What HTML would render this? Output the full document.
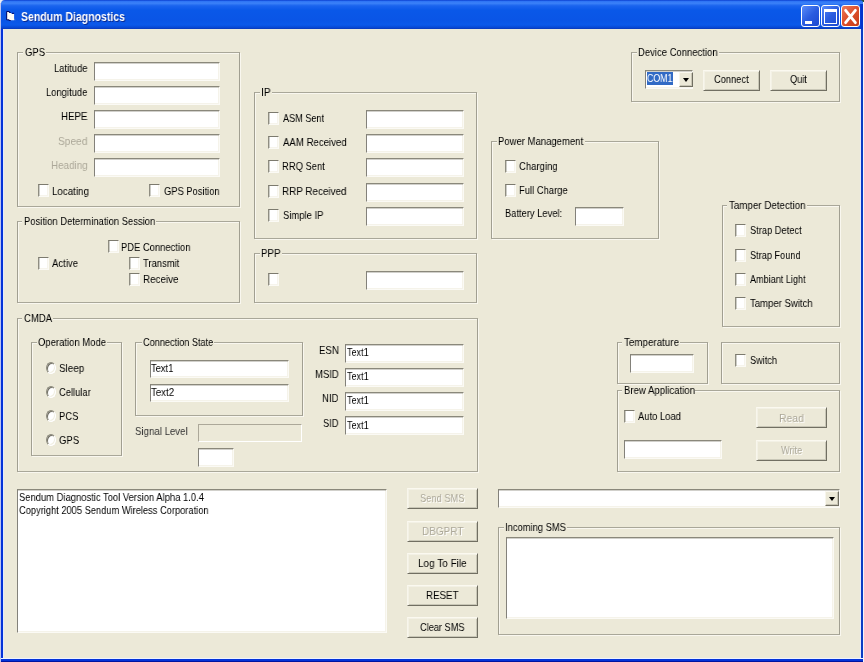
<!DOCTYPE html>
<html><head><meta charset="utf-8"><title>Sendum Diagnostics</title>
<style>
html,body{margin:0;padding:0;}
body{width:864px;height:662px;overflow:hidden;background:#ece9d8;position:relative;font-family:"Liberation Sans",sans-serif;}
#win{position:absolute;left:0;top:0;width:864px;height:662px;overflow:hidden;background:#ece9d8;}
.t{will-change:transform;position:absolute;font:11px/13px "Liberation Sans",sans-serif;white-space:nowrap;color:#000;transform-origin:0 0;}
.t.dis{color:#aca899;}
.t.dg{color:#aca899;}
.t.dw{color:#fff;}
.t.wh{color:#fff;}
.t.sl{color:#333;}
.gg{position:absolute;border:1px solid #a19f91;border-top-color:#a9a799;border-bottom-color:#a9a799;box-sizing:border-box;}
.gw{position:absolute;border:1px solid #f9f7ef;box-sizing:border-box;}
.gl{position:absolute;background:#ece9d8;}
.tb{position:absolute;box-sizing:border-box;background:#fff;border-top:1px solid #8a887b;border-left:1px solid #83817a;border-right:1px solid #fbfaf5;border-bottom:1px solid #fbfaf5;box-shadow:inset 0 1px 0 rgba(140,138,125,.4), inset -1px -1px 0 #f5f3ea;}
.cb{position:absolute;box-sizing:border-box;width:11px;height:13px;background:#fff;border-top:1px solid #7c7a6e;border-left:1px solid #8f8d81;border-right:1px solid #fbfaf5;border-bottom:1px solid #fbfaf5;box-shadow:inset 1px 0 0 rgba(143,141,129,.45), inset -1px -1px 0 #f6f4ec;}
.rd{position:absolute;box-sizing:border-box;width:10px;height:12px;border-radius:50%;background:#fff;border:1px solid;border-color:#8a887a #fff #fff #8a887a;box-shadow:inset 1px 1px 0 #716f64, inset -1px -1px 0 #f1efe2;}
.bt{position:absolute;box-sizing:border-box;background:#ece9d8;border-top:1px solid #fbf9f0;border-left:1px solid #f8f6ec;border-right:1px solid #716f62;border-bottom:1px solid #716f62;box-shadow:inset 1px 1px 0 #f3f1e5, inset -1px -1px 0 rgba(113,111,98,.28);}
.pb{position:absolute;box-sizing:border-box;border:1px solid;border-color:#aca899 #fff #fff #aca899;}
.sel{position:absolute;background:#316ac5;}
.dd{position:absolute;box-sizing:border-box;background:#ece9d8;border-top:1px solid #fbf9f0;border-left:1px solid #f8f6ec;border-right:1px solid #716f62;border-bottom:1px solid #716f62;box-shadow:inset -1px -1px 0 #c8c5b5;}
.dd i{position:absolute;left:2.5px;top:4.5px;width:0;height:0;border-left:3px solid transparent;border-right:3px solid transparent;border-top:4px solid #000;}
/* window chrome */
#corner{position:absolute;left:0;top:0;width:864px;height:6px;background:linear-gradient(to right,#eceef4 0,#eceef4 6px,#0a3ed0 6px,#0a3ed0 860px,#2a5236 860px);}
#title{position:absolute;left:1px;top:0;width:862px;height:29px;background:linear-gradient(to bottom,#0a3ed0 0%,#2f75f5 5%,#3c82f8 11%,#1a64ee 20%,#0a58e8 35%,#0a55e6 70%,#0b59ea 86%,#0848d4 95%,#0a38b8 100%);border-radius:4px 3px 0 0;}
#bl{position:absolute;left:0;top:3px;width:4px;height:659px;background:linear-gradient(to right,#bcc3f0 0,#bcc3f0 1px,#0433d8 1px,#0433d8 3px,#e4eafc 3px);}
#br{position:absolute;left:860px;top:3px;width:4px;height:659px;background:linear-gradient(to right,#e4eafc 0,#e4eafc 1px,#0c3cc4 1px,#0c3cc4 3px,#f2f4fc 3px);}
#bb{position:absolute;left:1px;top:658px;width:862px;height:4px;background:linear-gradient(to bottom,#eef2ff 0,#eef2ff 1px,#0433d8 1px,#0433d8 3px,#0014a0 3px);}
.wb{position:absolute;top:5px;width:19px;height:22px;box-sizing:border-box;border:1px solid #fff;border-radius:3px;background:linear-gradient(135deg,#5a8cfa 0%,#2a5ce0 50%,#1c48d0 100%);}
#bx{background:linear-gradient(135deg,#ec7a5c 0%,#dc4e2a 50%,#c63c18 100%);}
#tr{position:absolute;left:860px;top:4px;width:3px;height:25px;background:linear-gradient(to right,#0a48dc 0,#0434cc 1px,#0434cc 3px);}
#tr2{position:absolute;left:863px;top:2px;width:1px;height:28px;background:#f2f4fc;}

</style></head><body>
<div id="win">
<div id="corner"></div>
<div id="bl"></div><div id="br"></div><div id="bb"></div>
<div id="title"></div><div id="tr"></div><div id="tr2"></div>
<svg style="position:absolute;left:5px;top:10px" width="12" height="12" viewBox="0 0 12 12"><path d="M2 2h2.2v1h2.4v1h2.5v6.3h-4.8v-0.6h-2.3z" fill="#fdfcf8"/><path d="M1.7 9.9V1.5h2.6v1h1.4M6.9 3.3h2.2M1.7 9.8h2.4v0.7h1.6" fill="none" stroke="#00005a" stroke-width="0.9"/><path d="M9.1 8.2l1.6 2.1h-1.6z" fill="#7aa0d8" opacity=".7"/></svg>
<span class="t" style="left:20.8px;top:9px;font:bold 12px/16px 'Liberation Sans',sans-serif;color:#fff;transform:scaleX(.876);text-shadow:1px 1px 0 #0a2a90">Sendum Diagnostics</span>
<div class="wb" style="left:801px"><div style="position:absolute;left:3px;top:15px;width:7px;height:3px;background:#fff"></div></div>
<div class="wb" style="left:821px"><div style="position:absolute;left:2px;top:3px;width:13px;height:15px;box-sizing:border-box;border:1.5px solid #fff;border-top-width:3px"></div></div>
<div class="wb" id="bx" style="left:841px"><svg width="17" height="20" viewBox="0 0 17 20" style="position:absolute;left:0;top:0"><path d="M3.6 4.3L13.4 16.7M13.4 4.3L3.6 16.7" stroke="#fff" stroke-width="2.8" stroke-linecap="round"/></svg></div>

<div class="gw" style="left:18px;top:53px;width:223px;height:155px"></div>
<div class="gg" style="left:17px;top:52px;width:223px;height:155px"></div>
<div class="gl" style="left:23.2px;top:50px;width:22.599999999999998px;height:6px"></div>
<span class="t " style="left:24.73px;top:46px;transform:scaleX(0.8602);">GPS</span>
<div class="tb" style="left:94px;top:62px;width:126px;height:19px"></div>
<span class="t " style="left:53.83px;top:62px;transform:scaleX(0.8569);">Latitude</span>
<div class="tb" style="left:94px;top:86px;width:126px;height:19px"></div>
<span class="t " style="left:46.03px;top:86px;transform:scaleX(0.8562);">Longitude</span>
<div class="tb" style="left:94px;top:110px;width:126px;height:19px"></div>
<span class="t " style="left:60.95px;top:110px;transform:scaleX(0.884);">HEPE</span>
<div class="tb" style="left:94px;top:134px;width:126px;height:19px"></div>
<span class="t dis" style="left:58.29px;top:134.7px;transform:scaleX(0.9231);">Speed</span>
<div class="tb" style="left:94px;top:158px;width:126px;height:19px"></div>
<span class="t dis" style="left:50.94px;top:158.7px;transform:scaleX(0.8956);">Heading</span>
<div class="cb" style="left:38px;top:184px"></div>
<span class="t " style="left:51.7px;top:185px;transform:scaleX(0.8885);">Locating</span>
<div class="cb" style="left:149px;top:184px"></div>
<span class="t " style="left:164.03px;top:185px;transform:scaleX(0.8496);">GPS Position</span>
<div class="gw" style="left:18px;top:222px;width:223px;height:82px"></div>
<div class="gg" style="left:17px;top:221px;width:223px;height:82px"></div>
<div class="gl" style="left:22.4px;top:219px;width:133.4px;height:6px"></div>
<span class="t " style="left:23.63px;top:215px;transform:scaleX(0.8588);">Position Determination Session</span>
<div class="cb" style="left:108px;top:240px"></div>
<span class="t " style="left:121.43px;top:241px;transform:scaleX(0.8544);">PDE Connection</span>
<div class="cb" style="left:38px;top:257px"></div>
<span class="t " style="left:52.46px;top:256.5px;transform:scaleX(0.8722);">Active</span>
<div class="cb" style="left:129px;top:257px"></div>
<span class="t " style="left:143.39px;top:256.5px;transform:scaleX(0.8585);">Transmit</span>
<div class="cb" style="left:129px;top:273px"></div>
<span class="t " style="left:142.79px;top:272.7px;transform:scaleX(0.8968);">Receive</span>
<div class="gw" style="left:255px;top:93px;width:223px;height:147px"></div>
<div class="gg" style="left:254px;top:92px;width:223px;height:147px"></div>
<div class="gl" style="left:259.75px;top:90px;width:11.75px;height:6px"></div>
<span class="t " style="left:260.81px;top:86px;transform:scaleX(0.9361);">IP</span>
<div class="cb" style="left:268px;top:112px"></div>
<span class="t " style="left:282.96px;top:112px;transform:scaleX(0.8298);">ASM Sent</span>
<div class="tb" style="left:366px;top:110px;width:98px;height:19px"></div>
<div class="cb" style="left:268px;top:136px"></div>
<span class="t " style="left:282.96px;top:136px;transform:scaleX(0.8748);">AAM Received</span>
<div class="tb" style="left:366px;top:134px;width:98px;height:19px"></div>
<div class="cb" style="left:268px;top:160px"></div>
<span class="t " style="left:282.23px;top:160px;transform:scaleX(0.8543);">RRQ Sent</span>
<div class="tb" style="left:366px;top:158px;width:98px;height:19px"></div>
<div class="cb" style="left:268px;top:185px"></div>
<span class="t " style="left:282.19px;top:185px;transform:scaleX(0.896);">RRP Received</span>
<div class="tb" style="left:366px;top:183px;width:98px;height:19px"></div>
<div class="cb" style="left:268px;top:209px"></div>
<span class="t " style="left:282.57px;top:209px;transform:scaleX(0.8586);">Simple IP</span>
<div class="tb" style="left:366px;top:207px;width:98px;height:19px"></div>
<div class="gw" style="left:255px;top:254px;width:223px;height:50px"></div>
<div class="gg" style="left:254px;top:253px;width:223px;height:50px"></div>
<div class="gl" style="left:260px;top:251px;width:21.69999999999999px;height:6px"></div>
<span class="t " style="left:261.2px;top:247px;transform:scaleX(0.8876);">PPP</span>
<div class="cb" style="left:268px;top:273px"></div>
<div class="tb" style="left:366px;top:271px;width:98px;height:19px"></div>
<div class="gw" style="left:18px;top:319px;width:461px;height:154px"></div>
<div class="gg" style="left:17px;top:318px;width:461px;height:154px"></div>
<div class="gl" style="left:22.4px;top:316px;width:31.1px;height:6px"></div>
<span class="t " style="left:23.92px;top:312px;transform:scaleX(0.8678);">CMDA</span>
<div class="gw" style="left:32px;top:343px;width:91px;height:114px"></div>
<div class="gg" style="left:31px;top:342px;width:91px;height:114px"></div>
<div class="gl" style="left:36.8px;top:340px;width:70.7px;height:6px"></div>
<span class="t " style="left:38.37px;top:336px;transform:scaleX(0.8626);">Operation Mode</span>
<div class="rd" style="left:45.5px;top:362px"></div>
<span class="t " style="left:59.15px;top:362px;transform:scaleX(0.8985);">Sleep</span>
<div class="rd" style="left:45.5px;top:386px"></div>
<span class="t " style="left:59.13px;top:386px;transform:scaleX(0.8496);">Cellular</span>
<div class="rd" style="left:45.5px;top:410px"></div>
<span class="t " style="left:58.83px;top:410px;transform:scaleX(0.8609);">PCS</span>
<div class="rd" style="left:45.5px;top:434px"></div>
<span class="t " style="left:59.12px;top:434px;transform:scaleX(0.8647);">GPS</span>
<div class="gw" style="left:136px;top:343px;width:168px;height:74px"></div>
<div class="gg" style="left:135px;top:342px;width:168px;height:74px"></div>
<div class="gl" style="left:141.6px;top:340px;width:72.9px;height:6px"></div>
<span class="t " style="left:143.14px;top:336px;transform:scaleX(0.8322);">Connection State</span>
<div class="tb" style="left:150px;top:360px;width:139px;height:18px"></div>
<span class="t " style="left:151.39px;top:362.2px;transform:scaleX(0.8508);">Text1</span>
<div class="tb" style="left:150px;top:384px;width:139px;height:18px"></div>
<span class="t " style="left:151.38px;top:386.3px;transform:scaleX(0.88);">Text2</span>
<span class="t sl" style="left:134.96px;top:424.7px;transform:scaleX(0.879);">Signal Level</span>
<div class="pb" style="left:198px;top:424px;width:104px;height:18px"></div>
<div class="tb" style="left:198px;top:448px;width:36px;height:19px"></div>
<div class="tb" style="left:345px;top:344px;width:119px;height:19px"></div>
<span class="t " style="left:319.01px;top:344.2px;transform:scaleX(0.8795);">ESN</span>
<span class="t " style="left:346.79px;top:346px;transform:scaleX(0.8234);">Text1</span>
<div class="tb" style="left:345px;top:368px;width:119px;height:19px"></div>
<span class="t " style="left:314.82px;top:368.1px;transform:scaleX(0.8637);">MSID</span>
<span class="t " style="left:346.79px;top:370.2px;transform:scaleX(0.8234);">Text1</span>
<div class="tb" style="left:345px;top:392px;width:119px;height:19px"></div>
<span class="t " style="left:322.12px;top:392px;transform:scaleX(0.8681);">NID</span>
<span class="t " style="left:346.79px;top:394.4px;transform:scaleX(0.8234);">Text1</span>
<div class="tb" style="left:345px;top:416px;width:119px;height:19px"></div>
<span class="t " style="left:323.08px;top:416.7px;transform:scaleX(0.8436);">SID</span>
<span class="t " style="left:346.79px;top:418.6px;transform:scaleX(0.8234);">Text1</span>
<div class="gw" style="left:492px;top:142px;width:168px;height:98px"></div>
<div class="gg" style="left:491px;top:141px;width:168px;height:98px"></div>
<div class="gl" style="left:496.75px;top:139px;width:87.75px;height:6px"></div>
<span class="t " style="left:497.97px;top:135px;transform:scaleX(0.864);">Power Management</span>
<div class="cb" style="left:505px;top:160px"></div>
<span class="t " style="left:519.02px;top:160px;transform:scaleX(0.8651);">Charging</span>
<div class="cb" style="left:505px;top:184px"></div>
<span class="t " style="left:518.73px;top:184px;transform:scaleX(0.8559);">Full Charge</span>
<span class="t " style="left:504.99px;top:207px;transform:scaleX(0.8492);">Battery Level:</span>
<div class="tb" style="left:575px;top:207px;width:49px;height:19px"></div>
<div class="gw" style="left:632px;top:53px;width:209px;height:50px"></div>
<div class="gg" style="left:631px;top:52px;width:209px;height:50px"></div>
<div class="gl" style="left:636.75px;top:50px;width:81.75px;height:6px"></div>
<span class="t " style="left:637.97px;top:46px;transform:scaleX(0.8626);">Device Connection</span>
<div class="tb" style="left:645px;top:70px;width:48px;height:19px"></div>
<div class="sel" style="left:647px;top:72px;width:26px;height:13px"></div>
<span class="t wh" style="left:647.06px;top:72px;transform:scaleX(0.798);">COM1</span>
<div class="dd" style="left:679px;top:72px;width:14px;height:15px"><i></i></div>
<div class="bt" style="left:703px;top:70px;width:57px;height:21px"></div>
<span class="t " style="left:714.04px;top:72.6px;transform:scaleX(0.8424);">Connect</span>
<div class="bt" style="left:770px;top:70px;width:57px;height:21px"></div>
<span class="t " style="left:790.18px;top:72.6px;transform:scaleX(0.8362);">Quit</span>
<div class="gw" style="left:723px;top:206px;width:118px;height:122px"></div>
<div class="gg" style="left:722px;top:205px;width:118px;height:122px"></div>
<div class="gl" style="left:727.25px;top:203px;width:79.25px;height:6px"></div>
<span class="t " style="left:729.03px;top:199px;transform:scaleX(0.8885);">Tamper Detection</span>
<div class="cb" style="left:735px;top:224px"></div>
<span class="t " style="left:750.08px;top:224.4px;transform:scaleX(0.8457);">Strap Detect</span>
<div class="cb" style="left:735px;top:249px"></div>
<span class="t " style="left:750.08px;top:249.4px;transform:scaleX(0.8346);">Strap Found</span>
<div class="cb" style="left:735px;top:273px"></div>
<span class="t " style="left:750.46px;top:273.4px;transform:scaleX(0.8265);">Ambiant Light</span>
<div class="cb" style="left:735px;top:297px"></div>
<span class="t " style="left:750.28px;top:297.4px;transform:scaleX(0.8678);">Tamper Switch</span>
<div class="gw" style="left:618px;top:343px;width:91px;height:42px"></div>
<div class="gg" style="left:617px;top:342px;width:91px;height:42px"></div>
<div class="gl" style="left:622.4px;top:340px;width:57.89999999999998px;height:6px"></div>
<span class="t " style="left:624.18px;top:336px;transform:scaleX(0.8909);">Temperature</span>
<div class="tb" style="left:630px;top:354px;width:64px;height:19px"></div>
<div class="gw" style="left:722px;top:343px;width:119px;height:42px"></div>
<div class="gg" style="left:721px;top:342px;width:119px;height:42px"></div>
<div class="cb" style="left:735px;top:354px"></div>
<span class="t " style="left:749.88px;top:354px;transform:scaleX(0.8331);">Switch</span>
<div class="gw" style="left:618px;top:391px;width:223px;height:82px"></div>
<div class="gg" style="left:617px;top:390px;width:223px;height:82px"></div>
<div class="gl" style="left:622.4px;top:388px;width:73.10000000000002px;height:6px"></div>
<span class="t " style="left:623.61px;top:384px;transform:scaleX(0.8732);">Brew Application</span>
<div class="cb" style="left:624px;top:410px"></div>
<span class="t " style="left:638.16px;top:410px;transform:scaleX(0.8543);">Auto Load</span>
<div class="tb" style="left:624px;top:440px;width:98px;height:19px"></div>
<div class="bt" style="left:756px;top:407px;width:71px;height:21px"></div>
<span class="t dw" style="left:779.65px;top:412.9px;transform:scaleX(0.9433);">Read</span>
<span class="t dg" style="left:778.65px;top:411.9px;transform:scaleX(0.9433);">Read</span>
<div class="bt" style="left:756px;top:440px;width:71px;height:21px"></div>
<span class="t dw" style="left:781.86px;top:445.4px;transform:scaleX(0.8335);">Write</span>
<span class="t dg" style="left:780.86px;top:444.4px;transform:scaleX(0.8335);">Write</span>
<div class="tb" style="left:17px;top:489px;width:370px;height:144px"></div>
<span class="t " style="left:19.47px;top:490.7px;transform:scaleX(0.8549);">Sendum Diagnostic Tool Version Alpha 1.0.4</span>
<span class="t " style="left:19.44px;top:503.9px;transform:scaleX(0.8447);">Copyright 2005 Sendum Wireless Corporation</span>
<div class="bt" style="left:407px;top:488px;width:71px;height:21px"></div>
<span class="t dw" style="left:421.28px;top:492.7px;transform:scaleX(0.8467);">Send SMS</span>
<span class="t dg" style="left:420.28px;top:491.7px;transform:scaleX(0.8467);">Send SMS</span>
<div class="bt" style="left:407px;top:521px;width:71px;height:21px"></div>
<span class="t dw" style="left:422.78px;top:525.7px;transform:scaleX(0.9066);">DBGPRT</span>
<span class="t dg" style="left:421.78px;top:524.7px;transform:scaleX(0.9066);">DBGPRT</span>
<div class="bt" style="left:407px;top:553px;width:71px;height:21px"></div>
<span class="t " style="left:417.78px;top:556.7px;transform:scaleX(0.9072);">Log To File</span>
<div class="bt" style="left:407px;top:585px;width:71px;height:21px"></div>
<span class="t " style="left:426.0px;top:588.7px;transform:scaleX(0.887);">RESET</span>
<div class="bt" style="left:407px;top:617px;width:71px;height:21px"></div>
<span class="t " style="left:420.24px;top:620.7px;transform:scaleX(0.8378);">Clear SMS</span>
<div class="tb" style="left:498px;top:489px;width:342px;height:19px"></div>
<div class="dd" style="left:825px;top:491px;width:14px;height:15px"><i></i></div>
<div class="gw" style="left:499px;top:528px;width:342px;height:108px"></div>
<div class="gg" style="left:498px;top:527px;width:342px;height:108px"></div>
<div class="gl" style="left:503.7px;top:525px;width:63.099999999999966px;height:6px"></div>
<span class="t " style="left:504.85px;top:521px;transform:scaleX(0.8508);">Incoming SMS</span>
<div class="tb" style="left:506px;top:537px;width:328px;height:82px"></div>
</div>
</body></html>
